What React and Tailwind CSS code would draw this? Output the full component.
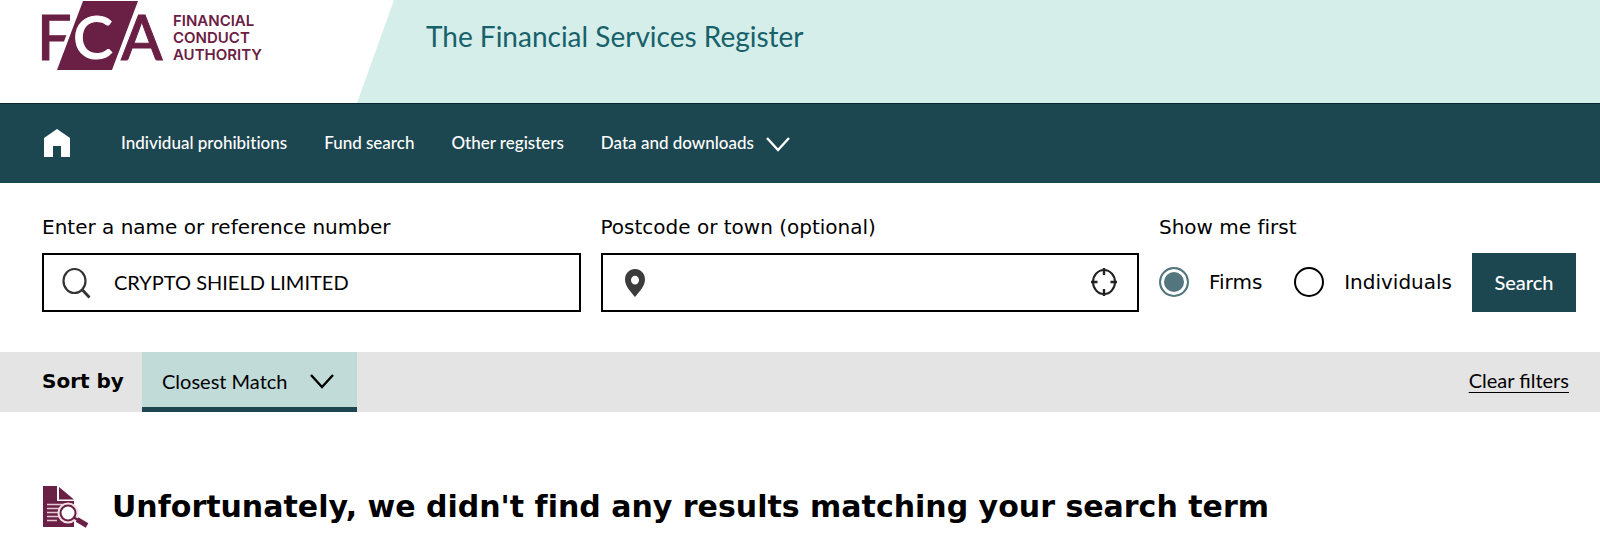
import React, { useState } from 'react';

const navLinks = ['Individual prohibitions', 'Fund search', 'Other registers'];

const inputStyle = "w-full h-[59px] border-2 border-black bg-white pb-0.5 font-['Lato',sans-serif] text-xl text-black outline-none";

const FcaLogo = () => (
  <svg className="block shrink-0" width="234" height="72" viewBox="-10 0 234 72" role="img" aria-label="Financial Conduct Authority">
    <g fontFamily="Lato, sans-serif" fontSize="61" fontWeight="500" fill="#6a2044" stroke="#6a2044" strokeWidth="1">
      <text x="-5" y="60">F</text>
      <text x="79" y="60">A</text>
    </g>
    <path d="M41 1H96L70 70H15Z" fill="#6a2044" stroke="#fff" strokeWidth="7" paintOrder="stroke" />
    <text x="31" y="59" fontFamily="Lato, sans-serif" fontSize="60" fontWeight="500" fill="#fff" stroke="#fff" strokeWidth="1">C</text>
    <g fontFamily="Inter, sans-serif" fontSize="15" fontWeight="600" fill="#6a2044">
      <text x="131" y="26">FINANCIAL</text>
      <text x="131" y="43">CONDUCT</text>
      <text x="131" y="60">AUTHORITY</text>
    </g>
  </svg>
);

const HomeIcon = () => (
  <svg width="26" height="28" viewBox="0 0 26 28" fill="#fff" aria-hidden="true">
    <path d="M13 0L26 9V28H17V17H9V28H0V9Z" />
  </svg>
);

const Chevron = ({ className }) => (
  <svg className={className} width="24" height="15" viewBox="0 0 24 15" fill="none" stroke="currentColor" strokeWidth="2.4" aria-hidden="true">
    <path d="M1 1L12 13L23 1" />
  </svg>
);

const SearchIcon = () => (
  <svg className="absolute left-5 top-3.5" width="29" height="32" viewBox="0 0 29 32" fill="none" stroke="#333" strokeWidth="2.2" aria-hidden="true">
    <ellipse cx="12.5" cy="14" rx="11" ry="12" />
    <path d="M20 22.5L27.500 30.500" strokeWidth="2.8" />
  </svg>
);

const PinIcon = () => (
  <svg className="absolute left-6 top-4" width="20" height="28" viewBox="0 0 20 28" fill="#3c3c3c" aria-hidden="true">
    <path fillRule="evenodd" d="M10 0C4.400 0 0 4.400 0 10.500C0 17 5.500 22.500 10 28C14.500 22.500 20 17 20 10.500C20 4.400 15.600 0 10 0ZM10 6.800A4 4.300 0 1 1 10 15.400A4 4.300 0 1 1 10 6.800Z" />
  </svg>
);

const TargetIcon = () => (
  <svg width="26" height="28" viewBox="0 0 26 28" fill="none" stroke="#222" strokeWidth="2" aria-hidden="true">
    <ellipse cx="13" cy="14" rx="11" ry="12" />
    <path d="M13 0V7M13 21V28M0 14H6.500M19.500 14H26" strokeWidth="2.400" />
  </svg>
);

const NoResultsIcon = () => (
  <svg className="shrink-0" width="46" height="42" viewBox="0 0 46 42" aria-hidden="true">
    <path d="M0 0H14V15H31V41H0Z" fill="#6a2044" />
    <path d="M16 1L31 13.500H16Z" fill="#6a2044" />
    <path d="M4 18.500H20M4 22.500H17M4 26.500H16M4 30.500H17M4 34.500H14" stroke="#e2c9d4" strokeWidth="1.400" />
    <path d="M31 31L36 34" stroke="#fff" strokeWidth="6" />
    <circle cx="25" cy="27" r="8" fill="#fff" stroke="#f3dfe3" strokeWidth="5" />
    <circle cx="25" cy="27" r="7.500" fill="#fff" stroke="#6a2044" strokeWidth="2" />
    <path d="M31 31.500L35 34" stroke="#6a2044" strokeWidth="2.500" />
    <path d="M34 33.500L44 39.500" stroke="#6a2044" strokeWidth="5" />
  </svg>
);

const Radio = ({ label, value, checked, onChange }) => (
  <label className="flex items-center gap-5">
    <input
      type="radio"
      name="showFirst"
      value={value}
      checked={checked}
      onChange={() => onChange(value)}
      className="m-0 size-[30px] appearance-none rounded-full border-2 border-black bg-white checked:border-[#53757d] checked:bg-[#53757d] checked:shadow-[inset_0_0_0_3px_#fff]"
    />
    {label}
  </label>
);

const App = () => {
  const [name, setName] = useState('CRYPTO SHIELD LIMITED');
  const [place, setPlace] = useState('');
  const [showFirst, setShowFirst] = useState('firms');

  return (
    <div className="min-h-screen w-full bg-white font-['DejaVu_Sans',sans-serif] text-black">
      <header className="flex h-[103px] pl-8">
        <div className="w-[325px] shrink-0">
          <FcaLogo />
        </div>
        <div className="flex-1 bg-[#d5eeea] pl-[69px] pt-4 [clip-path:polygon(37px_0,100%_0,100%_100%,0_100%)]">
          <p className="font-['Lato',sans-serif] text-[28px] leading-10 text-[#17616a]">The Financial Services Register</p>
        </div>
      </header>

      <nav className="flex h-20 items-center gap-[37px] border-t border-[#0b2730] bg-[#1d4750] pb-0.5 pl-11 font-['Lato',sans-serif] text-[17px] font-medium text-white [font-variant-ligatures:none]">
        <a href="#home" aria-label="Home" className="mr-3.5">
          <HomeIcon />
        </a>
        {navLinks.map((link) => (
          <a key={link} href="#register">{link}</a>
        ))}
        <button type="button" className="flex items-center gap-3">
          Data and downloads
          <Chevron className="mt-1" />
        </button>
      </nav>

      <form className="flex items-end gap-5 pb-10 pl-[42px] pr-6 pt-[30px] text-xl leading-7 [font-variant-ligatures:none]" onSubmit={(e) => e.preventDefault()}>
        <div className="flex-1">
          <label htmlFor="name" className="mb-3 block">Enter a name or reference number</label>
          <div className="relative">
            <SearchIcon />
            <input id="name" type="text" value={name} onChange={(e) => setName(e.target.value)} className={`${inputStyle} pl-[70px] pr-4`} />
          </div>
        </div>
        <div className="flex-1">
          <label htmlFor="place" className="mb-3 block">Postcode or town (optional)</label>
          <div className="relative">
            <PinIcon />
            <input id="place" type="text" value={place} onChange={(e) => setPlace(e.target.value)} className={`${inputStyle} px-[70px]`} />
            <button type="button" aria-label="Use my location" className="absolute right-[22px] top-[15px]">
              <TargetIcon />
            </button>
          </div>
        </div>
        <fieldset className="w-[293px]">
          <legend className="mb-3">Show me first</legend>
          <div className="flex h-[59px] items-center justify-between pb-0.5">
            <Radio label="Firms" value="firms" checked={showFirst === 'firms'} onChange={setShowFirst} />
            <Radio label="Individuals" value="individuals" checked={showFirst === 'individuals'} onChange={setShowFirst} />
          </div>
        </fieldset>
        <button type="submit" className="h-[59px] w-[104px] bg-[#1d4750] pb-0.5 font-['Lato',sans-serif] font-medium text-white">Search</button>
      </form>

      <div className="flex h-[60px] items-center bg-[#e4e4e4] pl-[42px] pr-[31px] text-xl">
        <label htmlFor="sort" className="w-20 whitespace-nowrap pb-0.5 font-bold">Sort by</label>
        <div className="relative ml-5 h-full">
          <select id="sort" className="h-full w-[215px] appearance-none border-b-[5px] border-[#1d4750] bg-[#c1dbd8] pl-5 pt-0.5 font-['Lato',sans-serif] outline-none">
            <option>Closest Match</option>
          </select>
          <Chevron className="pointer-events-none absolute right-[23px] top-[22px]" />
        </div>
        <a href="#clear" className="ml-auto pb-1 font-['Lato',sans-serif] underline decoration-1 underline-offset-4">Clear filters</a>
      </div>

      <main className="flex items-center gap-[23px] pl-[43px] pt-[74px]">
        <NoResultsIcon />
        <h1 className="text-3xl font-bold [font-variant-ligatures:none]">Unfortunately, we didn't find any results matching your search term</h1>
      </main>
    </div>
  );
};

export default App;
